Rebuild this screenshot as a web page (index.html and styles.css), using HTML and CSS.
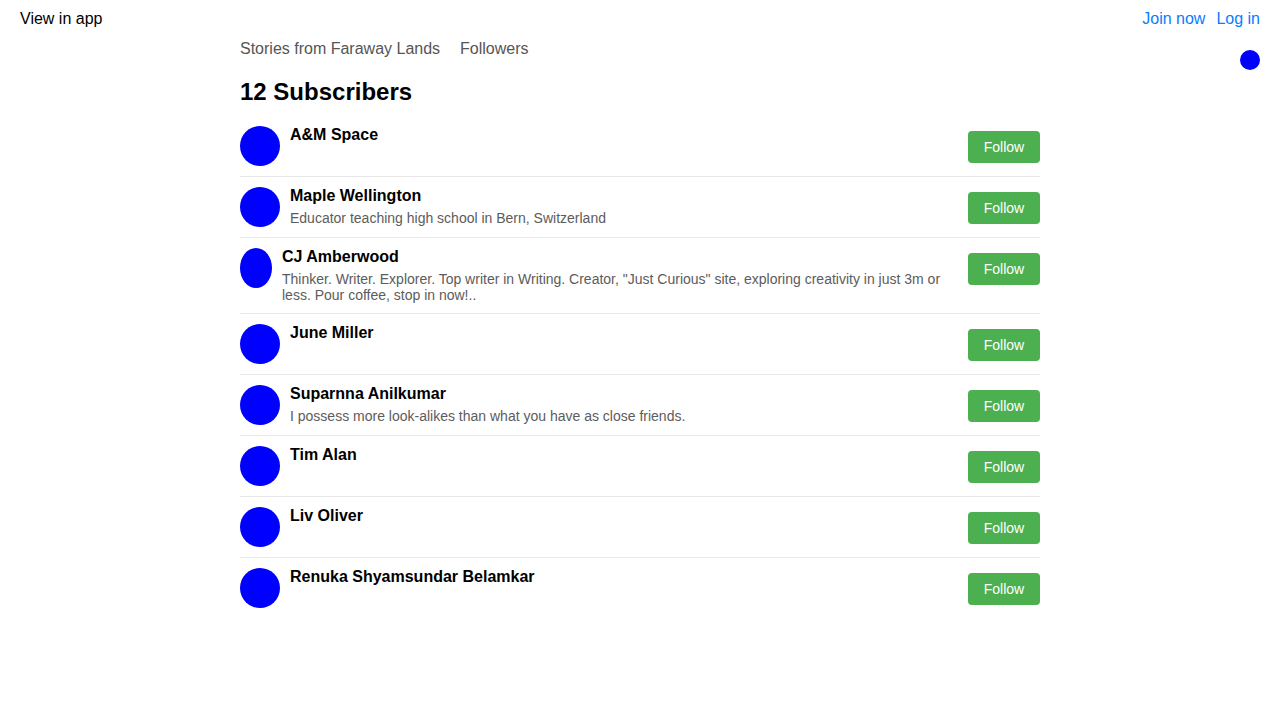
FILE: index.html
```html
<!DOCTYPE html>
<html>
<head>
<meta charset="utf-8">
<link rel="stylesheet" href="styles.css">
</head>
<body>
<header class="topbar">
  <a class="app-link">View in app</a>
  <nav class="auth">
    <a class="auth-link">Join now</a>
    <a class="auth-link">Log in</a>
  </nav>
</header>
<div class="corner"><span class="dot"></span></div>
<main class="content">
  <nav class="crumbs">
    <a class="crumb">Stories from Faraway Lands</a>
    <a class="crumb">Followers</a>
  </nav>
  <h1 class="title">12 Subscribers</h1>
  <ul class="list">
    <li class="row">
      <span class="avatar"></span>
      <div class="info"><div class="name">A&amp;M Space</div></div>
      <button class="follow">Follow</button>
    </li>
    <li class="row">
      <span class="avatar"></span>
      <div class="info"><div class="name">Maple Wellington</div><div class="bio">Educator teaching high school in Bern, Switzerland</div></div>
      <button class="follow">Follow</button>
    </li>
    <li class="row">
      <span class="avatar"></span>
      <div class="info"><div class="name">CJ Amberwood</div><div class="bio">Thinker. Writer. Explorer. Top writer in Writing. Creator, "Just Curious" site, exploring creativity in just 3m or less. Pour coffee, stop in now!..</div></div>
      <button class="follow">Follow</button>
    </li>
    <li class="row">
      <span class="avatar"></span>
      <div class="info"><div class="name">June Miller</div></div>
      <button class="follow">Follow</button>
    </li>
    <li class="row">
      <span class="avatar"></span>
      <div class="info"><div class="name">Suparnna Anilkumar</div><div class="bio">I possess more look-alikes than what you have as close friends.</div></div>
      <button class="follow">Follow</button>
    </li>
    <li class="row">
      <span class="avatar"></span>
      <div class="info"><div class="name">Tim Alan</div></div>
      <button class="follow">Follow</button>
    </li>
    <li class="row">
      <span class="avatar"></span>
      <div class="info"><div class="name">Liv Oliver</div></div>
      <button class="follow">Follow</button>
    </li>
    <li class="row">
      <span class="avatar"></span>
      <div class="info"><div class="name">Renuka Shyamsundar Belamkar</div></div>
      <button class="follow">Follow</button>
    </li>
  </ul>
</main>
</body>
</html>
```
FILE: styles.css
```css
html, body {
  margin: 0;
  padding: 0;
  background: #fff;
  font-family: "Liberation Sans", Arial, Helvetica, sans-serif;
  color: #000;
}
a { text-decoration: none; cursor: pointer; }
.topbar {
  display: flex;
  justify-content: space-between;
  align-items: center;
  height: 36px;
  padding: 1px 20px 0;
  font-size: 16px;
}
.app-link { color: #000; }
.auth { display: flex; gap: 11px; }
.auth-link { color: #0a7cff; }
.corner {
  display: flex;
  justify-content: flex-end;
  padding-right: 20px;
  height: 0;
}
.dot {
  display: block;
  width: 20px;
  height: 20px;
  border-radius: 50%;
  background: #0000ff;
  margin-top: 13px;
}
.content {
  width: 800px;
  margin: 0 auto;
}
.crumbs {
  display: flex;
  gap: 20px;
  font-size: 16px;
  line-height: 24px;
}
.crumb { color: #555; }
.title {
  margin: 0;
  padding-top: 16px;
  font-size: 24px;
  line-height: 30px;
  font-weight: bold;
}
.list {
  list-style: none;
  margin: 0;
  padding: 0;
  margin-top: 9px;
}
.row {
  display: flex;
  align-items: flex-start;
  padding: 10px 0;
  border-bottom: 1px solid #e8e8e8;
}
.row:last-child { border-bottom: none; }
.avatar {
  width: 40px;
  min-width: 32px;
  height: 40px;
  border-radius: 50%;
  background: #0000ff;
  flex-shrink: 1;
}
.info {
  flex: 0 1 auto;
  margin-left: 10px;
  margin-right: auto;
  padding-right: 24px;
}
.name {
  font-size: 16px;
  line-height: 18px;
  font-weight: bold;
}
.bio {
  margin-top: 5px;
  font-size: 14px;
  line-height: 16px;
  color: #5c5c5c;
}
.follow {
  flex-shrink: 0;
  width: 72px;
  height: 32px;
  margin-top: 5px;
  border: none;
  border-radius: 4px;
  background: #4caf50;
  color: #fff;
  font-family: "Liberation Sans", Arial, Helvetica, sans-serif;
  font-size: 14px;
  padding: 0;
}
```
